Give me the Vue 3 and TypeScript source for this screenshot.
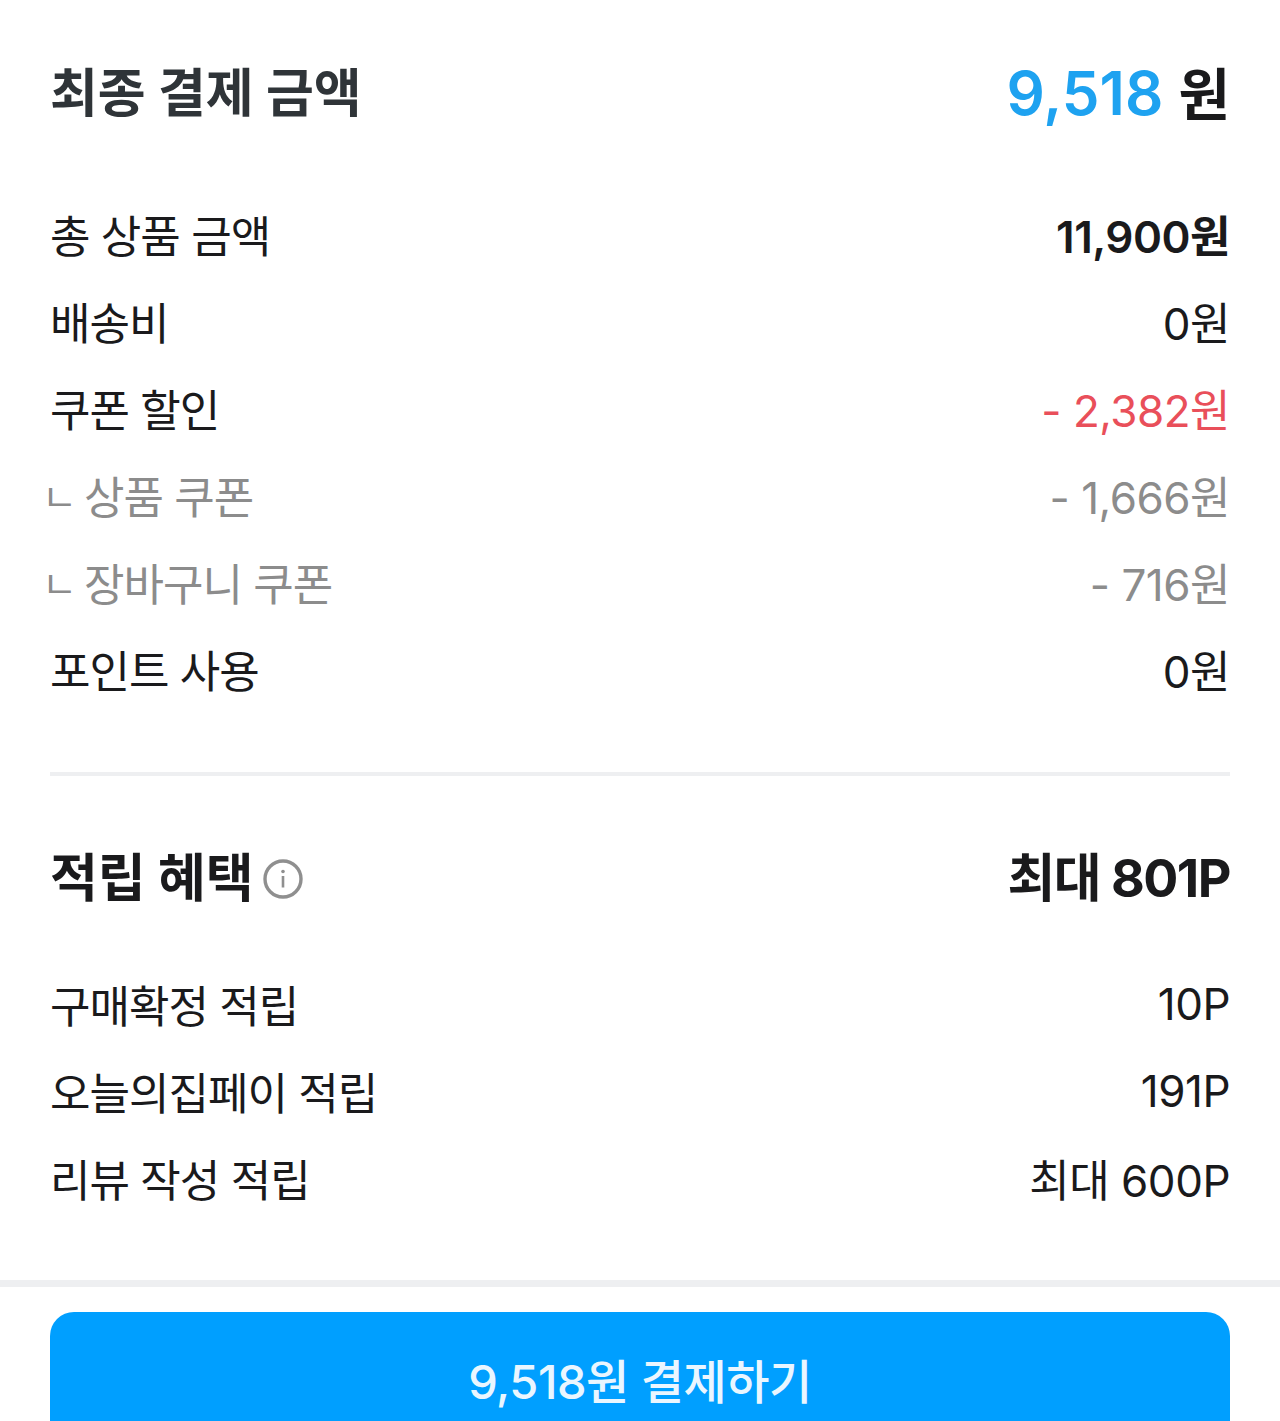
<template>
  <div class="page">
    <section class="summary">
      <div class="head">
        <h2 class="title dim">최종 결제 금액</h2>
        <div class="total"><span class="blue">9,518</span> <span class="won">원</span></div>
      </div>
      <div class="rows">
        <div v-for="row in payRows" :key="row.label" class="row" :class="row.kind">
          <span class="label"><span v-if="row.kind === 'sub'" class="corner">ㄴ</span>{{ row.label }}</span>
          <span class="value">{{ row.value }}</span>
        </div>
      </div>
    </section>

    <div class="line"></div>

    <section class="benefit">
      <div class="head benefit-head">
        <div class="title-wrap">
          <h2 class="title">적립 혜택</h2>
          <svg class="info" width="40" height="40" viewBox="0 0 40 40" fill="none">
            <circle cx="20" cy="20" r="18" stroke="#8f8f8f" stroke-width="3.4" />
            <circle cx="20" cy="12.5" r="1.8" fill="#8f8f8f" />
            <rect x="18.7" y="17" width="2.6" height="11.5" fill="#8f8f8f" />
          </svg>
        </div>
        <div class="max">최대 801P</div>
      </div>
      <div class="rows point-rows">
        <div v-for="row in pointRows" :key="row.label" class="row">
          <span class="label">{{ row.label }}</span>
          <span class="value">{{ row.value }}</span>
        </div>
      </div>
    </section>

    <div class="bottom">
      <button class="pay">9,518원 결제하기</button>
    </div>
  </div>
</template>

<script setup lang="ts">
interface Row {
  label: string;
  value: string;
  kind?: string;
}

const payRows: Row[] = [
  { label: '총 상품 금액', value: '11,900원', kind: 'strong' },
  { label: '배송비', value: '0원' },
  { label: '쿠폰 할인', value: '- 2,382원', kind: 'red' },
  { label: '상품 쿠폰', value: '- 1,666원', kind: 'sub' },
  { label: '장바구니 쿠폰', value: '- 716원', kind: 'sub' },
  { label: '포인트 사용', value: '0원' },
];

const pointRows: Row[] = [
  { label: '구매확정 적립', value: '10P' },
  { label: '오늘의집페이 적립', value: '191P' },
  { label: '리뷰 작성 적립', value: '최대 600P' },
];
</script>

<style>
html,
body {
  margin: 0;
  background: #fff;
}
</style>

<style scoped>
.page {
  width: 1280px;
  height: 1421px;
  overflow: hidden;
  background: #fff;
  color: #1a1a1c;
  font-family: Inter, 'Noto Sans CJK KR', sans-serif;
}

.summary {
  padding: 60px 50px 0;
}

.head {
  display: flex;
  justify-content: space-between;
  align-items: center;
  height: 68px;
}

.title {
  margin: 0;
  font-size: 52px;
  font-weight: 700;
  line-height: 68px;
}

.dim {
  color: #2f3438;
}

.total {
  font-size: 60px;
  font-weight: 600;
  line-height: 68px;
}

.blue {
  color: #1ea2f0;
}

.won {
  font-weight: 700;
  font-size: 56px;
}

.rows {
  display: flex;
  flex-direction: column;
  margin-top: 62px;
}

.point-rows {
  margin-top: 47px;
}

.row {
  display: flex;
  justify-content: space-between;
  align-items: center;
  height: 87px;
  font-size: 44px;
}

.label {
  letter-spacing: -1px;
}

.value {
  letter-spacing: -0.5px;
}

.strong .value {
  font-weight: 600;
}

.red .value {
  color: #e94f5a;
}

.sub {
  color: #8c8c8c;
}

.corner {
  font-size: 38px;
  line-height: 1;
  margin: 0 8px 0 -8px;
  vertical-align: 3px;
}

.line {
  height: 4px;
  margin: 60px 50px 0;
  background: #eeeff1;
}

.benefit {
  padding: 0 50px;
  margin-top: 69px;
}

.title-wrap {
  display: flex;
  align-items: center;
  gap: 9px;
}

.info {
  display: block;
}

.max {
  font-size: 52px;
  font-weight: 700;
  line-height: 68px;
  letter-spacing: -1.5px;
}

.bottom {
  margin-top: 59px;
  border-top: 7px solid #eeeff1;
  padding: 25px 50px 0;
}

.pay {
  display: block;
  width: 100%;
  height: 160px;
  padding: 0 0 28px;
  border: none;
  border-radius: 24px;
  background: #009fff;
  color: #eaf6ff;
  font-family: Inter, 'Noto Sans CJK KR', sans-serif;
  font-size: 47px;
  font-weight: 500;
  letter-spacing: -0.5px;
}
</style>
